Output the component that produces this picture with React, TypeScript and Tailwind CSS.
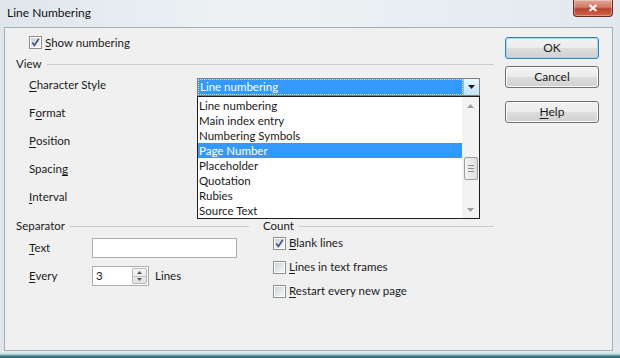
import type { ReactNode } from "react"

const listItems = [
  "Line numbering",
  "Main index entry",
  "Numbering Symbols",
  "Page Number",
  "Placeholder",
  "Quotation",
  "Rubies",
  "Source Text",
]

function Mn({ children }: { children: ReactNode }) {
  return <span className="underline decoration-1 underline-offset-2">{children}</span>
}

function CheckBox({ checked }: { checked?: boolean }) {
  return (
    <svg width="13" height="13" viewBox="0 0 13 13" className="shrink-0">
      <defs>
        <linearGradient id="cbg" x1="0" y1="0" x2="1" y2="1">
          <stop offset="0" stopColor="#cdd2d8" />
          <stop offset="1" stopColor="#f7f7f7" />
        </linearGradient>
      </defs>
      <rect x="0.5" y="0.5" width="12" height="12" fill="#fff" stroke="#8e8f8f" />
      <rect x="2" y="2" width="9" height="9" fill="url(#cbg)" />
      {checked && (
        <path d="M3.3 6.6 L5.4 9.4 L9.8 2.8" fill="none" stroke="#3d5386" strokeWidth="1.7" />
      )}
    </svg>
  )
}

function Button({ children, focused }: { children: ReactNode; focused?: boolean }) {
  return (
    <div
      className={
        "flex h-[22px] w-[94px] items-center justify-center rounded-[3px] border bg-[linear-gradient(#f3f3f3_0%,#ececec_48%,#dddddd_52%,#d0d0d0_100%)] text-[12px] text-[#1b1b1b] " +
        (focused
          ? "border-[#3c7fb1] shadow-[inset_0_0_0_1px_#9fdcf2]"
          : "border-[#707070] shadow-[inset_0_0_0_1px_#fbfbfb]")
      }
    >
      {children}
    </div>
  )
}

function GroupHead({ label, endGap }: { label: string; endGap?: boolean }) {
  return (
    <div className={"flex h-[14px] items-center gap-[5px] " + (endGap ? "mr-[14px]" : "")}>
      <span>{label}</span>
      <div className="h-px flex-1 bg-[#c9cdd0]" />
    </div>
  )
}

export default function App() {
  return (
    <div className="flex h-[358px] w-[620px] flex-col overflow-hidden bg-[linear-gradient(90deg,#dfe7ec,#eef2f5_40%,#e2e9ee)] font-['Lato','Liberation_Sans',sans-serif] text-[11.5px] leading-none text-[#1a1a1a]">
      {/* title bar */}
      <div className="flex h-[27px] shrink-0 items-start justify-between pl-[7px]">
        <span className="mt-[7px] text-[12px] text-[#111]">Line Numbering</span>
        <div className="mr-[7px] flex h-[17px] w-[40px] items-center justify-center rounded-b-[4px] border border-t-0 border-[#6b2b22] bg-[linear-gradient(#e2a596_0%,#d07a66_45%,#b9412b_55%,#d0654a_100%)] shadow-[inset_0_0_0_1px_rgba(255,255,255,0.35)]">
          <svg width="10" height="8" viewBox="0 0 10 8">
            <path d="M1.5 1 L8.5 7 M8.5 1 L1.5 7" stroke="#fff" strokeWidth="2" />
          </svg>
        </div>
      </div>

      {/* client area */}
      <div className="flex-1 pl-[4px] pr-[7px]">
        <div className="flex h-full border border-[#a7b0b6] bg-[#f0f0f0] pl-[11px] pt-[8px]">
          {/* left column */}
          <div className="flex w-[478px] flex-col">
            <div className="flex h-[13px] items-center gap-[3px] pl-[13px]">
              <CheckBox checked />
              <span>
                <Mn>S</Mn>how numbering
              </span>
            </div>

            <div className="mt-[8px]">
              <GroupHead label="View" />
            </div>

            <div className="flex flex-col pl-[13px]">
              <div className="flex h-[28px] items-center">
                <span className="w-[168px]">
                  <Mn>C</Mn>haracter Style
                </span>
                <div className="relative mt-[7px] self-start">
                  <div className="flex h-[18px] w-[283px] border border-[#7f7f7f] bg-white">
                    <div className="flex flex-1 items-center bg-[#3399ff] pl-[2px] text-white outline-1 outline-dotted outline-offset-[-1px] outline-[#cfe6ff]">
                      Line numbering
                    </div>
                    <div className="flex w-[16px] items-center justify-center border-l border-[#98b9d6] bg-[linear-gradient(#eaf6fd,#bfe3f9)]">
                      <svg width="7" height="4" viewBox="0 0 7 4">
                        <path d="M0 0 H7 L3.5 4 Z" fill="#1c1c1c" />
                      </svg>
                    </div>
                  </div>

                  {/* open dropdown list */}
                  <div className="absolute left-0 top-full z-10 flex h-[123px] w-[283px] border border-[#1e1e1e] bg-white">
                    <div className="flex flex-1 flex-col pt-px">
                      {listItems.map((item) => (
                        <div
                          key={item}
                          className={
                            "flex h-[15px] items-center pl-[1px] " +
                            (item === "Page Number" ? "bg-[#3399ff] text-white" : "")
                          }
                        >
                          {item}
                        </div>
                      ))}
                    </div>
                    <div className="flex w-[17px] flex-col items-center bg-[#f3f3f3]">
                      <div className="flex h-[17px] items-center">
                        <svg width="7" height="4" viewBox="0 0 7 4">
                          <path d="M0 4 H7 L3.5 0 Z" fill="#9a9a9a" />
                        </svg>
                      </div>
                      <div className="mt-[43px] flex h-[23px] w-[14px] flex-col items-center justify-center gap-[2px] rounded-[2px] border border-[#9c9c9c] bg-[linear-gradient(90deg,#f4f4f4,#dedede)]">
                        <div className="h-px w-[6px] bg-[#8a8a8a]" />
                        <div className="h-px w-[6px] bg-[#8a8a8a]" />
                        <div className="h-px w-[6px] bg-[#8a8a8a]" />
                      </div>
                      <div className="mt-auto flex h-[17px] items-center">
                        <svg width="7" height="4" viewBox="0 0 7 4">
                          <path d="M0 0 H7 L3.5 4 Z" fill="#9a9a9a" />
                        </svg>
                      </div>
                    </div>
                  </div>
                </div>
              </div>
              <div className="flex h-[28px] items-center">
                F<Mn>o</Mn>rmat
              </div>
              <div className="flex h-[28px] items-center">
                <Mn>P</Mn>osition
              </div>
              <div className="flex h-[28px] items-center">
                Spacin<Mn>g</Mn>
              </div>
              <div className="flex h-[28px] items-center">
                <Mn>I</Mn>nterval
              </div>
            </div>

            {/* separator + count */}
            <div className="mt-[8px] grid grid-cols-[247px_231px]">
              <div className="flex flex-col">
                <GroupHead label="Separator" endGap />
                <div className="mt-px flex h-[28px] items-center pl-[13px]">
                  <span className="w-[63px]">
                    <Mn>T</Mn>ext
                  </span>
                  <div className="h-[20px] w-[145px] border border-[#abadb3] bg-white" />
                </div>
                <div className="flex h-[28px] items-center pl-[13px]">
                  <span className="w-[63px]">
                    <Mn>E</Mn>very
                  </span>
                  <div className="flex h-[20px] w-[57px] items-center border border-[#abadb3] bg-white pl-[3px] pr-px">
                    <span className="flex-1">3</span>
                    <div className="flex h-[16px] w-[15px] flex-col rounded-[2px] border border-[#b5b9bf] bg-[linear-gradient(#f5f5f5,#e2e2e2)]">
                      <div className="flex flex-1 items-center justify-center border-b border-[#c3c3c3]">
                        <svg width="5" height="3" viewBox="0 0 5 3">
                          <path d="M0 3 H5 L2.5 0 Z" fill="#555" />
                        </svg>
                      </div>
                      <div className="flex flex-1 items-center justify-center">
                        <svg width="5" height="3" viewBox="0 0 5 3">
                          <path d="M0 0 H5 L2.5 3 Z" fill="#555" />
                        </svg>
                      </div>
                    </div>
                  </div>
                  <span className="ml-[6px]">Lines</span>
                </div>
              </div>

              <div className="flex flex-col">
                <GroupHead label="Count" />
                <div className="flex flex-col gap-[4px] pl-[10px]">
                  <div className="flex h-[20px] items-center gap-[3px]">
                    <CheckBox checked />
                    <span>
                      <Mn>B</Mn>lank lines
                    </span>
                  </div>
                  <div className="flex h-[20px] items-center gap-[3px]">
                    <CheckBox />
                    <span>
                      <Mn>L</Mn>ines in text frames
                    </span>
                  </div>
                  <div className="flex h-[20px] items-center gap-[3px]">
                    <CheckBox />
                    <span>
                      <Mn>R</Mn>estart every new page
                    </span>
                  </div>
                </div>
              </div>
            </div>
          </div>

          {/* buttons */}
          <div className="ml-[11px] flex flex-col pt-px">
            <Button focused>OK</Button>
            <div className="mt-[7px]">
              <Button>Cancel</Button>
            </div>
            <div className="mt-[13px]">
              <Button>
                <span>
                  <Mn>H</Mn>elp
                </span>
              </Button>
            </div>
          </div>
        </div>
      </div>

      {/* bottom frame edge */}
      <div className="h-[7px] shrink-0 bg-[linear-gradient(#e6eef0,#cfe3e6_40%,#3f7f86_75%,#2d6066)]" />
    </div>
  )
}
